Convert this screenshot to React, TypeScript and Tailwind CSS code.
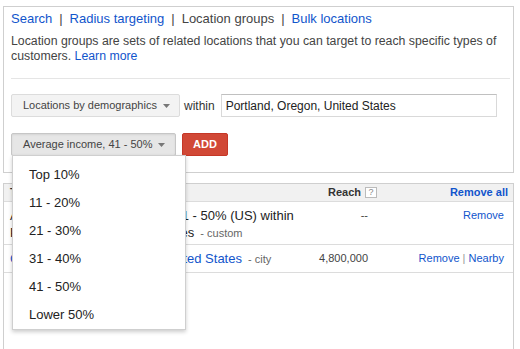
import React from "react";

function Caret() {
  return (
    <svg width="7" height="4" viewBox="0 0 7 4" className="shrink-0">
      <path d="M0 0 L7 0 L3.5 4 Z" fill="#777" />
    </svg>
  );
}

const items = ["Top 10%", "11 - 20%", "21 - 30%", "31 - 40%", "41 - 50%", "Lower 50%"];

export default function App() {
  return (
    <div className="h-[349px] overflow-hidden bg-white font-['Liberation_Sans',Arial,sans-serif] text-[#222] pt-[6px] pl-[3px] flex flex-col">
      <div className="w-[511px] shrink-0 border border-[#cfcfcf] pl-[7px] pr-[3px] pt-[4px] pb-[16px]">
        <div className="flex items-center h-[16px] text-[13px] leading-[16px]">
          <a className="text-[#1155cc]">Search</a>
          <span className="mx-[7px] text-[#444]">|</span>
          <a className="text-[#1155cc]">Radius targeting</a>
          <span className="mx-[7px] text-[#444]">|</span>
          <span className="text-[#444]">Location groups</span>
          <span className="mx-[7px] text-[#444]">|</span>
          <a className="text-[#1155cc]">Bulk locations</a>
        </div>
        <p className="mt-[7px] text-[12.3px] leading-[15px] text-[#444]">
          Location groups are sets of related locations that you can target to reach specific types of customers.{" "}
          <a className="text-[#1155cc]">Learn more</a>
        </p>
        <div className="mt-[14px] h-px bg-[#e5e5e5]" />
        <div className="mt-[15px] flex items-center h-[23px]">
          <div className="w-[169px] h-[23px] flex items-center pl-[11px] rounded-[2px] border border-[#dcdcdc] bg-[#f3f3f3] text-[11px] text-[#444]">
            <span>Locations by demographics</span>
            <span className="ml-[6px] flex"><Caret /></span>
          </div>
          <span className="ml-[4px] text-[12px] text-[#333]">within</span>
          <input
            readOnly
            value="Portland, Oregon, United States"
            className="ml-[6px] w-[276px] h-[23px] border border-[#d9d9d9] border-t-[#c0c0c0] pl-[4px] text-[12px] text-[#222] outline-none"
          />
        </div>
        <div className="mt-[16px] flex items-center h-[23px]">
          <div className="relative">
            <div className="w-[165px] h-[23px] flex items-center pl-[11px] rounded-[2px] border border-[#c6c6c6] bg-[#e6e6e6] text-[11px] text-[#444] shadow-[inset_0_1px_2px_rgba(0,0,0,0.08)]">
              <span>Average income, 41 - 50%</span>
              <span className="ml-[6px] flex"><Caret /></span>
            </div>
            <div className="absolute left-[1px] top-[22px] z-10 w-[174px] bg-white border border-[#cfcfcf] shadow-[0_2px_4px_rgba(0,0,0,0.2)] pt-[5px]">
              {items.map((t) => (
                <div key={t} className="h-[28px] flex items-center pl-[16px] text-[13px] text-[#222]">
                  {t}
                </div>
              ))}
            </div>
          </div>
          <div className="ml-[6px] w-[46px] h-[23px] flex items-center justify-center rounded-[2px] border border-[#c53727] bg-[#d14836] text-white text-[11px] font-bold">
            ADD
          </div>
        </div>
      </div>

      <div className="mt-[10px] w-[511px] flex-1 border-x border-t border-[#cfcfcf] text-[11px]">
        <div className="flex items-center h-[18px] bg-[#f1f1f1] border-b border-[#dcdcdc] font-bold text-[#333]">
          <div className="flex-1 pl-[6px]">Targeted locations</div>
          <div className="w-[60px] flex justify-end items-center pr-[1px]">
            <span>Reach</span>
            <span className="ml-[4px] w-[12px] h-[11px] flex items-center justify-center border border-[#bbb] bg-white text-[9px] font-normal text-[#888] leading-none">?</span>
          </div>
          <div className="w-[135px] text-right pr-[5px] text-[#1155cc]">Remove all</div>
        </div>
        <div className="flex h-[43px] border-b border-[#dcdcdc]">
          <div className="flex-1 pl-[6px] pt-[5px] text-[13px] leading-[17px] text-[#222]">
            Average household income, 41 - 50% (US) within Portland, Oregon, United States
            <span className="ml-[3px] text-[11px] text-[#666]"> - custom</span>
          </div>
          <div className="w-[60px] pt-[5px] leading-[17px] text-right pr-[10px] text-[#444]">--</div>
          <div className="w-[135px] pt-[5px] leading-[17px] text-right pr-[9px] text-[#1155cc]">Remove</div>
        </div>
        <div className="flex items-center h-[28px] border-b border-[#dcdcdc]">
          <div className="flex-1 pl-[6px] text-[13px] whitespace-nowrap">
            <a className="text-[#1155cc]">Greater Portland, Oregon, United States</a>
            <span className="ml-[3px] text-[11px] text-[#666]"> - city</span>
          </div>
          <div className="w-[60px] text-right pr-[10px] text-[#444]">4,800,000</div>
          <div className="w-[135px] text-right pr-[9px] text-[#1155cc]">
            Remove <span className="text-[#999]">|</span> Nearby
          </div>
        </div>
      </div>
    </div>
  );
}
